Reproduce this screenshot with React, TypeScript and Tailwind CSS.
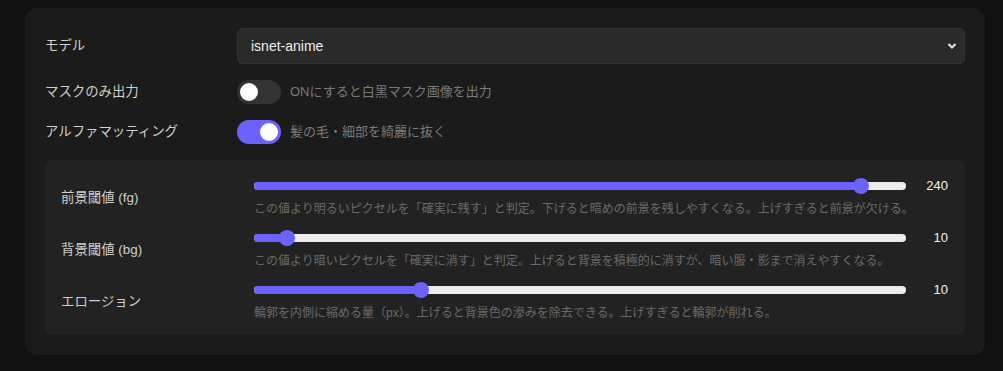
import React, { useState } from "react";

const jp = "font-['Liberation_Sans','Noto_Sans_CJK_JP',sans-serif]";

interface SliderRowProps {
  label: string;
  value: number;
  max: number;
  desc: string;
}

const SliderRow: React.FC<SliderRowProps> = ({ label, value, max, desc }) => {
  const pos = `calc(8px + ${value / max} * (100% - 16px))`;
  return (
    <div className="flex items-center">
      <div className="w-[193px] shrink-0 text-[13.4px] text-[#cfcfcf]">{label}</div>
      <div className="flex-1">
        <div className="flex h-[18px] items-center">
          <div className="relative h-2 flex-1 rounded-full bg-[#ececec]">
            <div className="absolute left-0 top-0 h-2 rounded-full bg-[#6c63ff]" style={{ width: pos }} />
            <div
              className="absolute top-1/2 h-4 w-4 -translate-x-1/2 -translate-y-1/2 rounded-full bg-[#6c63ff]"
              style={{ left: pos }}
            />
          </div>
          <div className="w-[42px] text-right text-[13px] text-[#f0f0f0]">{value}</div>
        </div>
        <div className="mt-[5px] text-[12px] leading-[19px] text-[#6a6a6a]">{desc}</div>
      </div>
    </div>
  );
};

const Toggle: React.FC<{ on: boolean; onClick: () => void }> = ({ on, onClick }) => (
  <button
    onClick={onClick}
    className={`relative h-6 w-11 shrink-0 rounded-full ${on ? "bg-[#6c63ff]" : "bg-[#333333]"}`}
  >
    <span
      className={`absolute top-[3px] h-[18px] w-[18px] rounded-full bg-white ${on ? "left-[23px]" : "left-[3px]"}`}
    />
  </button>
);

export default function App() {
  const [maskOnly, setMaskOnly] = useState(false);
  const [alpha, setAlpha] = useState(true);

  return (
    <div className={`min-h-screen bg-[#111111] pl-[25px] pt-2 ${jp}`}>
      <div className="flex w-[960px] flex-col gap-4 rounded-xl bg-[#1b1b1b] p-5">
        <div className="flex items-center">
          <div className="w-[192px] shrink-0 text-[13.4px] text-[#cfcfcf]">モデル</div>
          <div className="relative flex-1">
            <select className="h-9 w-full appearance-none rounded-md border border-[#353535] bg-[#2a2a2a] pl-[13px] text-[14px] text-[#eeeeee] outline-none">
              <option>isnet-anime</option>
            </select>
            <svg
              className="pointer-events-none absolute right-[8px] top-1/2 -translate-y-1/2"
              width="10"
              height="8"
              viewBox="0 0 10 8"
            >
              <polyline points="1.5,2 5,5.5 8.5,2" fill="none" stroke="#e8e8e8" strokeWidth="2" />
            </svg>
          </div>
        </div>

        <div className="flex items-center">
          <div className="w-[192px] shrink-0 text-[13.4px] text-[#cfcfcf]">マスクのみ出力</div>
          <Toggle on={maskOnly} onClick={() => setMaskOnly(!maskOnly)} />
          <span className="ml-[9px] text-[13px] text-[#7a7a7a]">ONにすると白黒マスク画像を出力</span>
        </div>

        <div className="flex items-center">
          <div className="w-[192px] shrink-0 text-[13.4px] text-[#cfcfcf]">アルファマッティング</div>
          <Toggle on={alpha} onClick={() => setAlpha(!alpha)} />
          <span className="ml-[9px] text-[13px] text-[#7a7a7a]">髪の毛・細部を綺麗に抜く</span>
        </div>

        <div className="flex flex-col gap-[10px] rounded-lg bg-[#222222] pb-3 pl-4 pr-[17px] pt-[17px]">
          <SliderRow
            label="前景閾値 (fg)"
            value={240}
            max={255}
            desc="この値より明るいピクセルを「確実に残す」と判定。下げると暗めの前景を残しやすくなる。上げすぎると前景が欠ける。"
          />
          <SliderRow
            label="背景閾値 (bg)"
            value={10}
            max={255}
            desc="この値より暗いピクセルを「確実に消す」と判定。上げると背景を積極的に消すが、暗い服・影まで消えやすくなる。"
          />
          <SliderRow
            label="エロージョン"
            value={10}
            max={40}
            desc="輪郭を内側に縮める量（px）。上げると背景色の滲みを除去できる。上げすぎると輪郭が削れる。"
          />
        </div>
      </div>
    </div>
  );
}
